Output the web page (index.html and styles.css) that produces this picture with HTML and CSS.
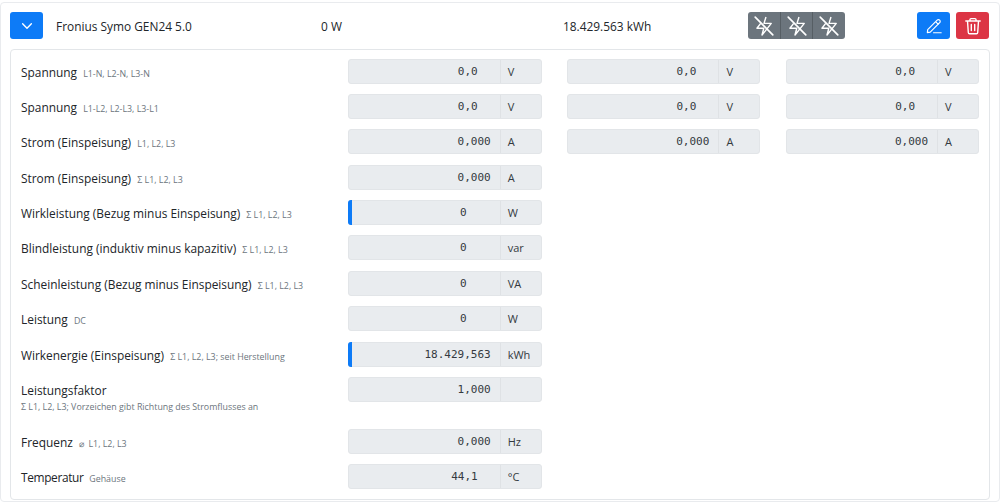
FILE: index.html
```html
<!DOCTYPE html>
<html lang="de">
<head>
  <meta charset="UTF-8">
  <meta name="viewport" content="width=device-width, initial-scale=1.0">
  <title>Zähler</title>
  <link rel="stylesheet" href="styles.css">
</head>
<body>
  <svg class="icon-defs" width="0" height="0">
    <symbol id="bolt-off" viewBox="0 0 20 20">
      <path d="M11.8 1.8 L10 7.6 H16.6 L8.2 18.2 L9.8 12 H3.6 L7 7.6" fill="none" stroke="currentColor" stroke-width="1.3" stroke-linejoin="round"/>
      <path d="M2 2 L18 18" fill="none" stroke="currentColor" stroke-width="1.5" stroke-linecap="round"/>
    </symbol>
  </svg>

  <div class="meter">
    <div class="meter-head">
      <button class="btn btn-blue btn-toggle">
        <svg viewBox="0 0 16 16" width="14" height="14"><path d="M3 5.5 L8 10.5 L13 5.5" fill="none" stroke="currentColor" stroke-width="1.6" stroke-linecap="round" stroke-linejoin="round"/></svg>
      </button>
      <div class="meter-name">Fronius Symo GEN24 5.0</div>
      <div class="meter-power">0 W</div>
      <div class="meter-energy">18.429.563 kWh</div>
      <div class="btn-group">
        <button class="btn btn-gray"><svg width="22" height="22"><use href="#bolt-off"/></svg></button>
        <button class="btn btn-gray"><svg width="22" height="22"><use href="#bolt-off"/></svg></button>
        <button class="btn btn-gray"><svg width="22" height="22"><use href="#bolt-off"/></svg></button>
      </div>
      <button class="btn btn-blue btn-edit">
        <svg viewBox="0 0 20 20" width="18" height="18"><path d="M3 14 L13.5 3.5 a1.8 1.8 0 0 1 2.8 2.8 L5.8 16.8 L2.6 17.4 Z M11.8 5.2 L14.8 8.2 M9.5 17.5 H18" fill="none" stroke="currentColor" stroke-width="1.3" stroke-linecap="round" stroke-linejoin="round"/></svg>
      </button>
      <button class="btn btn-red">
        <svg viewBox="0 0 20 20" width="20" height="20"><path d="M2.8 5 H17.2 M7 5 V3.6 a1 1 0 0 1 1-1 H12 a1 1 0 0 1 1 1 V5 M4.5 5 L5.3 16.5 a1.3 1.3 0 0 0 1.3 1.2 H13.4 a1.3 1.3 0 0 0 1.3-1.2 L15.5 5 M8.3 8.5 V14.5 M11.7 8.5 V14.5" fill="none" stroke="currentColor" stroke-width="1.4" stroke-linecap="round" stroke-linejoin="round"/></svg>
      </button>
    </div>

    <div class="meter-body">
      <div class="row">
        <div class="label">Spannung <small>L1-N, L2-N, L3-N</small></div>
        <div class="field"><div class="value dec1">0,0</div><div class="unit">V</div></div>
        <div class="field"><div class="value dec1">0,0</div><div class="unit">V</div></div>
        <div class="field"><div class="value dec1">0,0</div><div class="unit">V</div></div>
      </div>
      <div class="row">
        <div class="label">Spannung <small>L1-L2, L2-L3, L3-L1</small></div>
        <div class="field"><div class="value dec1">0,0</div><div class="unit">V</div></div>
        <div class="field"><div class="value dec1">0,0</div><div class="unit">V</div></div>
        <div class="field"><div class="value dec1">0,0</div><div class="unit">V</div></div>
      </div>
      <div class="row">
        <div class="label">Strom (Einspeisung) <small>L1, L2, L3</small></div>
        <div class="field"><div class="value">0,000</div><div class="unit">A</div></div>
        <div class="field"><div class="value">0,000</div><div class="unit">A</div></div>
        <div class="field"><div class="value">0,000</div><div class="unit">A</div></div>
      </div>
      <div class="row">
        <div class="label">Strom (Einspeisung) <small>Σ L1, L2, L3</small></div>
        <div class="field"><div class="value">0,000</div><div class="unit">A</div></div>
      </div>
      <div class="row">
        <div class="label">Wirkleistung (Bezug minus Einspeisung) <small>Σ L1, L2, L3</small></div>
        <div class="field has-bar"><div class="value dec0">0</div><div class="unit">W</div></div>
      </div>
      <div class="row">
        <div class="label">Blindleistung (induktiv minus kapazitiv) <small>Σ L1, L2, L3</small></div>
        <div class="field"><div class="value dec0">0</div><div class="unit">var</div></div>
      </div>
      <div class="row">
        <div class="label">Scheinleistung (Bezug minus Einspeisung) <small>Σ L1, L2, L3</small></div>
        <div class="field"><div class="value dec0">0</div><div class="unit">VA</div></div>
      </div>
      <div class="row">
        <div class="label">Leistung <small>DC</small></div>
        <div class="field"><div class="value dec0">0</div><div class="unit">W</div></div>
      </div>
      <div class="row">
        <div class="label">Wirkenergie (Einspeisung) <small>Σ L1, L2, L3; seit Herstellung</small></div>
        <div class="field has-bar"><div class="value">18.429,563</div><div class="unit">kWh</div></div>
      </div>
      <div class="row row-tall">
        <div class="label">Leistungsfaktor<small class="block">Σ L1, L2, L3; Vorzeichen gibt Richtung des Stromflusses an</small></div>
        <div class="field"><div class="value">1,000</div><div class="unit"></div></div>
      </div>
      <div class="row">
        <div class="label">Frequenz <small>⌀&nbsp; L1, L2, L3</small></div>
        <div class="field"><div class="value">0,000</div><div class="unit">Hz</div></div>
      </div>
      <div class="row">
        <div class="label label-tight">Temperatur <small>Gehäuse</small></div>
        <div class="field"><div class="value dec1">44,1</div><div class="unit">°C</div></div>
      </div>
    </div>
  </div>
</body>
</html>
```

FILE: styles.css
```css
* {
  box-sizing: border-box;
}

body {
  margin: 0;
  padding-top: 2px;
  height: 502px;
  overflow: hidden;
  background-color: white;
  color: #212529;
  font-family: "Open Sans", "Noto Sans", sans-serif;
  font-size: 11.9px;
}

.icon-defs {
  position: absolute;
}

.meter {
  border: 1px solid #e9ebee;
  border-radius: 4px;
  height: 500px;
}

/* Kopfzeile */
.meter-head {
  display: flex;
  align-items: center;
  height: 46px;
  padding: 0 9px 1px;
}

.meter-name {
  width: 265px;
  margin-left: 13px;
}

.meter-power {
  width: 242px;
}

.meter-energy {
  width: 185px;
}

.btn {
  display: flex;
  align-items: center;
  justify-content: center;
  height: 27px;
  padding: 0;
  border: 0;
  border-radius: 3px;
  color: white;
}

.btn-blue {
  background-color: #0d7bf7;
}

.btn-toggle {
  width: 33px;
}

.btn-group {
  display: flex;
  width: 97px;
  margin-right: 72px;
}

.btn-gray {
  flex: 1;
  background-color: #6c757d;
  border-radius: 0;
  border-left: 1px solid #565e64;
}

.btn-gray:first-child {
  border-left: 0;
  border-radius: 3px 0 0 3px;
}

.btn-gray:last-child {
  border-radius: 0 3px 3px 0;
}

.btn-edit {
  width: 33px;
  margin-right: 6px;
}

.btn-red {
  width: 33px;
  background-color: #dc3545;
}

/* Werte */
.meter-body {
  margin: 0 9px;
  padding: 8.5px 10px 0;
  height: 451px;
  border: 1px solid #e3e6e9;
  border-radius: 4px;
}

.row {
  display: grid;
  grid-template-columns: 302px repeat(3, 193.5px);
  column-gap: 25.2px;
  height: 35.4px;
}

.row-tall {
  height: 52px;
}

.label {
  padding-top: 1px;
  line-height: 25px;
  white-space: nowrap;
}

.label small {
  margin-left: 3px;
  font-size: 8.85px;
  color: #6c757d;
}

.label small.block {
  display: block;
  margin: -3px 0 0;
  line-height: 14px;
}

.label-tight {
  letter-spacing: -0.35px;
}

.label-tight small {
  letter-spacing: 0;
}

.field {
  position: relative;
  display: flex;
  height: 25px;
  line-height: 24px;
  background-color: #e9ecef;
  border: 1px solid #e2e5e8;
  border-radius: 3px;
}

/* kleiner Balken am linken Rand */
.field.has-bar::before {
  content: "";
  position: absolute;
  left: -1px;
  top: -1px;
  bottom: -1px;
  width: 4px;
  background-color: #0d7bf7;
  border-radius: 3px 0 0 3px;
}

.value {
  flex: 1;
  padding-right: 9px;
  text-align: right;
  font-family: "DejaVu Sans Mono", monospace;
  font-size: 11px;
  color: #343a40;
}

.value.dec1 {
  padding-right: 22px;
}

.value.dec0 {
  padding-right: 33px;
}

.unit {
  width: 41px;
  padding-left: 7px;
  border-left: 1px solid #dfe2e5;
  font-size: 11px;
  color: #343a40;
}
```
